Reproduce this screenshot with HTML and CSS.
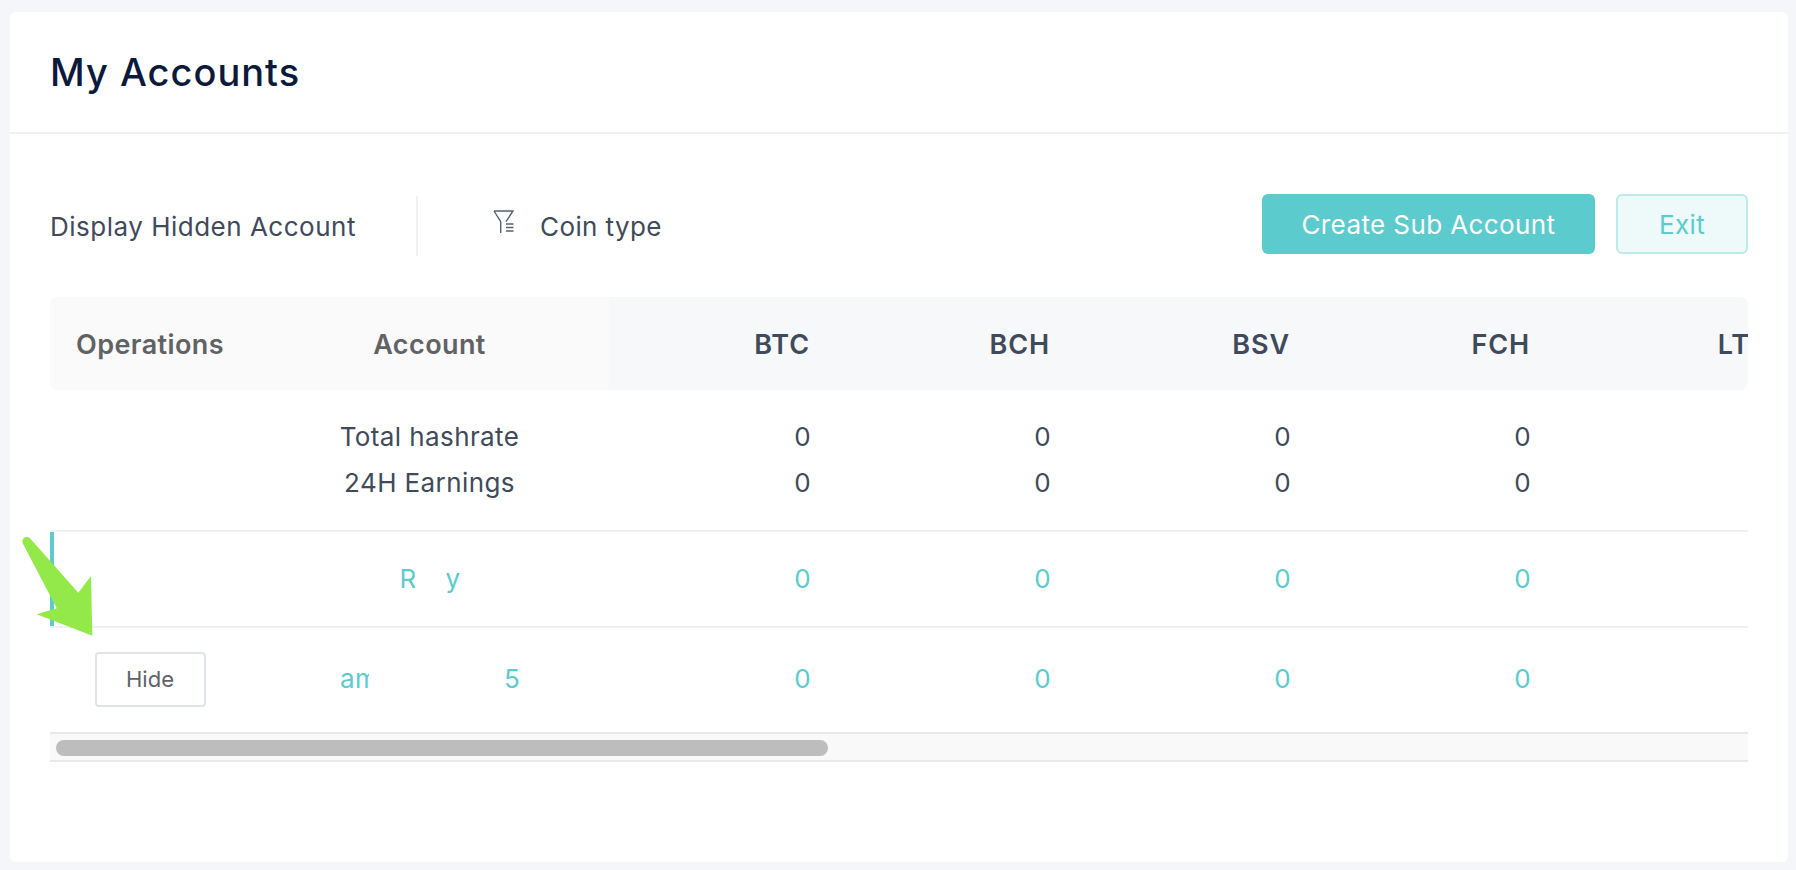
FILE: index.html
```html
<!DOCTYPE html>
<html lang="en">
<head>
    <meta charset="UTF-8">
    <meta name="viewport" content="width=device-width, initial-scale=1.0">
    <title>My Accounts</title>
    <link rel="stylesheet" href="styles.css">
</head>
<body>

    <div class="card">
        <div class="card-header">
            <h2>My Accounts</h2>
        </div>

        <div class="toolbar">
            <span class="hidden-label">Display Hidden Account</span>
            <span class="toolbar-divider"></span>
            <svg class="filter-icon" width="24" height="26" viewBox="0 0 24 26" fill="none" stroke="#566272" stroke-width="1.4">
                <path d="M2 2H21L14 12.7M2 2L8.7 12.7V24"/>
                <path d="M14 15H21.5M14 18.5H21.5M14 22H21.5"/>
            </svg>
            <span class="coin-label">Coin type</span>
            <button class="btn-create">Create Sub Account</button>
            <button class="btn-exit">Exit</button>
        </div>

        <div class="table">
            <div class="row head">
                <div class="cell ops fixed">Operations</div>
                <div class="cell account fixed">Account</div>
                <div class="cell num">BTC</div>
                <div class="cell num">BCH</div>
                <div class="cell num">BSV</div>
                <div class="cell num">FCH</div>
                <div class="cell num">LTC</div>
            </div>

            <div class="row total">
                <div class="cell ops"></div>
                <div class="cell account">
                    <div>Total hashrate</div>
                    <div>24H Earnings</div>
                </div>
                <div class="cell num"><div>0</div><div>0</div></div>
                <div class="cell num"><div>0</div><div>0</div></div>
                <div class="cell num"><div>0</div><div>0</div></div>
                <div class="cell num"><div>0</div><div>0</div></div>
                <div class="cell num"><div>0</div><div>0</div></div>
            </div>

            <div class="row link current">
                <div class="cell ops"></div>
                <div class="cell account"><span class="name-r">R</span><span class="name-y">y</span></div>
                <div class="cell num">0</div>
                <div class="cell num">0</div>
                <div class="cell num">0</div>
                <div class="cell num">0</div>
                <div class="cell num">0</div>
            </div>

            <div class="row link last">
                <div class="cell ops"><button class="btn-hide">Hide</button></div>
                <div class="cell account"><span class="name-am">am</span><span class="name-5">5</span></div>
                <div class="cell num">0</div>
                <div class="cell num">0</div>
                <div class="cell num">0</div>
                <div class="cell num">0</div>
                <div class="cell num">0</div>
            </div>

            <div class="scrollbar">
                <div class="scrollbar-thumb"></div>
            </div>
        </div>
    </div>

    <svg class="arrow" width="80" height="106" viewBox="0 0 80 106">
        <path fill="#94e94a" d="M1.7 7.3C0 3 5 -1 9 2.3L57.3 56.7L70 40L71.3 99.7L15.7 78.3L35.7 72.3Z"/>
    </svg>

</body>
</html>
```

FILE: styles.css
```css
* {
    box-sizing: border-box;
}
body {
    margin: 0;
    padding: 12px 8px 8px 10px;
    background-color: #f4f6fa;
    font-family: Inter, "Liberation Sans", Arial, sans-serif;
    font-size: 26px;
    letter-spacing: 0.4px;
    color: #3f4a5a;
}
.card {
    height: 850px;
    background: white;
    border-radius: 6px;
}
.card-header {
    height: 122px;
    padding: 0 40px;
    display: flex;
    align-items: center;
    border-bottom: 2px solid #f0f1f3;
}
h2 {
    margin: 0;
    font-size: 38px;
    font-weight: 500;
    letter-spacing: 1px;
    color: #0b1a3c;
}
.toolbar {
    display: flex;
    align-items: center;
    height: 60px;
    margin: 60px 40px 43px 40px;
}
.hidden-label {
    width: 366px;
    padding-top: 5px;
    letter-spacing: 0.5px;
}
.toolbar-divider {
    width: 2px;
    height: 60px;
    margin-top: 4px;
    background-color: #f0f1f3;
}
.filter-icon {
    margin: -4px 24px 0 74px;
}
.coin-label {
    margin-right: auto;
    padding-top: 5px;
}
button {
    font-family: inherit;
    letter-spacing: inherit;
    cursor: pointer;
}
.btn-create {
    width: 333px;
    height: 60px;
    font-size: 26px;
    color: white;
    background-color: #5bcbcd;
    border: none;
    border-radius: 6px;
}
.btn-exit {
    width: 132px;
    height: 60px;
    margin-left: 21px;
    font-size: 26px;
    color: #5bcbcd;
    background-color: #eef9fa;
    border: 2px solid #bfeaeb;
    border-radius: 6px;
}
.table {
    width: 1698px;
    margin-left: 40px;
}
.row {
    display: grid;
    grid-template-columns: 200px 359px 202px repeat(4, 240px);
    overflow: hidden;
    align-items: center;
    border-bottom: 2px solid #eef0f5;
}
.cell {
    white-space: nowrap;
}
.ops, .account {
    text-align: center;
}
.num {
    text-align: right;
}
.head {
    height: 93px;
    font-size: 27px;
    font-weight: 600;
    background-color: #f7f8fa;
    border-bottom: none;
    border-radius: 8px;
}
.head .cell {
    line-height: 95px;
    height: 93px;
}
.head .num {
    padding-right: 1px;
    letter-spacing: 0.9px;
}
.head .fixed {
    color: #606266;
    background-color: #fafafa;
}
.total {
    height: 142px;
    line-height: 46px;
}
.link {
    color: #5bcbcd;
}
.current {
    height: 96px;
    box-shadow: inset 4px 0 0 #5bcbcd;
}
.current .cell {
    padding-bottom: 2px;
}
.last {
    height: 104px;
    border-bottom: none;
}
.last .cell {
    padding-bottom: 4px;
}
.last .ops {
    padding-bottom: 2px;
}
.account span {
    display: inline-block;
    overflow: hidden;
    vertical-align: bottom;
}
.name-r {
    width: 15px;
    margin-right: 31px;
}
.name-y {
    width: 14px;
}
.name-am {
    width: 29px;
    margin-right: 135px;
}
.name-5 {
    width: 15px;
}
.btn-hide {
    width: 111px;
    height: 55px;
    font-size: 22px;
    letter-spacing: 0;
    color: #606266;
    background: white;
    border: 2px solid #e0e3ea;
    border-radius: 4px;
}
.scrollbar {
    height: 30px;
    padding: 6px 0 0 6px;
    background-color: #f9f9f9;
    border-top: 2px solid #e8e8e8;
    border-bottom: 2px solid #e8e8e8;
}
.scrollbar-thumb {
    width: 772px;
    height: 16px;
    background-color: #bdbdbd;
    border-radius: 8px;
}
.arrow {
    position: absolute;
    left: 21px;
    top: 536px;
}
```
